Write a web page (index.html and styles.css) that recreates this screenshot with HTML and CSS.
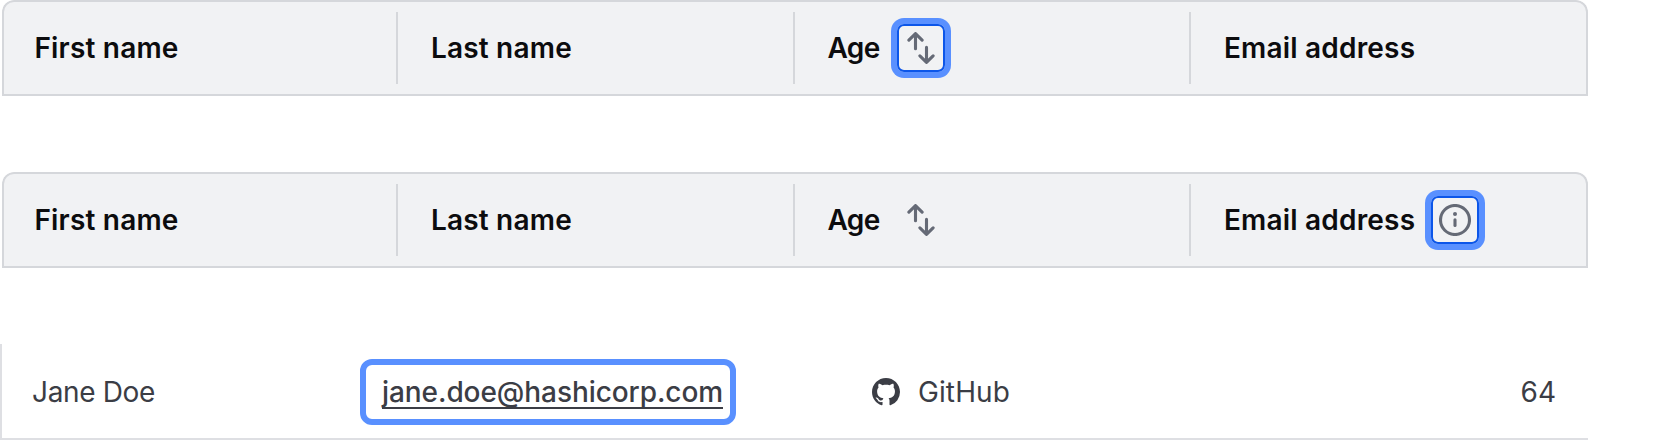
FILE: index.html
```
<!DOCTYPE html>
<html lang="en">
<head>
<meta charset="utf-8">
<title>Table focus states</title>
<link rel="stylesheet" href="styles.css">
</head>
<body>
<main class="page">
  <div class="table-head">
    <div class="th"><span>First name</span></div>
    <div class="th"><span>Last name</span></div>
    <div class="th"><span class="age">Age</span>
      <button class="icon-button focused" aria-label="Sort"><svg class="icon arrows" viewBox="0 0 32 32"><path d="M3.9 8.2 10.5 1.6 17.1 8.2M10.5 2V16.8M21.5 15.4V30M14.9 23.8 21.5 30.4 28.1 23.8"/></svg></button>
    </div>
    <div class="th"><span class="email">Email address</span></div>
  </div>

  <div class="table-head">
    <div class="th"><span>First name</span></div>
    <div class="th"><span>Last name</span></div>
    <div class="th"><span class="age">Age</span>
      <button class="icon-button" aria-label="Sort"><svg class="icon arrows" viewBox="0 0 32 32"><path d="M3.9 8.2 10.5 1.6 17.1 8.2M10.5 2V16.8M21.5 15.4V30M14.9 23.8 21.5 30.4 28.1 23.8"/></svg></button>
    </div>
    <div class="th"><span class="email">Email address</span>
      <button class="icon-button focused" aria-label="More information"><svg class="icon" viewBox="0 0 32 32"><circle cx="16" cy="16" r="14.5"/><path d="M16 15.8V21.5"/><circle class="dot" cx="16" cy="10" r="2"/></svg></button>
    </div>
  </div>

  <div class="table-row">
    <div class="td name">Jane Doe</div>
    <div class="td link-cell"><a class="link" href="#"><span class="link-text">jane.doe@hashicorp.com</span></a></div>
    <div class="td provider">
      <svg class="github" viewBox="0 0 16 16"><path d="M8 0C3.58 0 0 3.58 0 8c0 3.54 2.29 6.53 5.47 7.59.4.07.55-.17.55-.38 0-.19-.01-.82-.01-1.49-2.01.37-2.53-.49-2.69-.94-.09-.23-.48-.94-.82-1.13-.28-.15-.68-.52-.01-.53.63-.01 1.08.58 1.23.82.72 1.21 1.87.87 2.33.66.07-.52.28-.87.51-1.07-1.78-.2-3.64-.89-3.64-3.95 0-.87.31-1.59.82-2.15-.08-.2-.36-1.02.08-2.12 0 0 .67-.21 2.2.82.64-.18 1.32-.27 2-.27s1.36.09 2 .27c1.53-1.04 2.2-.82 2.2-.82.44 1.1.16 1.92.08 2.12.51.56.82 1.27.82 2.15 0 3.07-1.87 3.75-3.65 3.95.29.25.54.73.54 1.48 0 1.07-.01 1.93-.01 2.2 0 .21.15.46.55.38A8.01 8.01 0 0 0 16 8c0-4.42-3.58-8-8-8z"/></svg>
      <span>GitHub</span>
    </div>
    <div class="td count">64</div>
  </div>
</main>
</body>
</html>
```
FILE: styles.css
```
* {
  box-sizing: border-box;
}

body {
  margin: 0;
  background: #fff;
  font-family: Inter, sans-serif;
  font-size: 28px;
  line-height: 40px;
}

.page {
  width: 1588px;
  height: 440px;
  display: flex;
  flex-direction: column;
}

.table-head {
  display: grid;
  grid-template-columns: repeat(4, 1fr);
  height: 96px;
  margin: 0 0 76px 2px;
  flex: none;
  background:
    linear-gradient(#d5d7db, #d5d7db) 394px 12px / 2px 72px no-repeat,
    linear-gradient(#d5d7db, #d5d7db) 791px 12px / 2px 72px no-repeat,
    linear-gradient(#d5d7db, #d5d7db) 1187px 12px / 2px 72px no-repeat,
    #f1f2f4;
  box-shadow: inset 0 0 0 2px #d5d7db;
  border-radius: 12px 12px 0 0;
  color: #0c0c0e;
  font-weight: 600;
  letter-spacing: 0.2px;
}

.th {
  display: flex;
  align-items: center;
  padding-left: 32.4px;
}

.age {
  width: 53.6px;
  letter-spacing: -0.5px;
}

.email {
  width: 191.6px;
  white-space: nowrap;
}

.icon-button {
  width: 48px;
  height: 48px;
  margin-left: 16px;
  padding: 0;
  display: flex;
  align-items: center;
  justify-content: center;
  border: 2px solid transparent;
  border-radius: 7px;
  background: transparent;
}

.focused {
  border-color: #0c56e9;
  box-shadow: 0 0 0 6px #5990ff;
}

.icon {
  width: 32px;
  height: 32px;
  fill: none;
  stroke: #656a76;
  stroke-width: 3.1;
  stroke-linecap: round;
  stroke-linejoin: round;
}

.dot {
  fill: #656a76;
  stroke: none;
}

.table-row {
  display: grid;
  grid-template-columns: 358px 500px 400px 1fr;
  height: 96px;
  border-left: 2px solid #dedfe3;
  border-bottom: 2px solid #dedfe3;
  color: #3b3d45;
}

.td {
  display: flex;
  align-items: center;
  padding-top: 2px;
}

.name {
  padding-left: 30px;
  letter-spacing: -0.35px;
}

.link {
  width: 376px;
  height: 66px;
  padding-left: 16px;
  display: flex;
  align-items: center;
  border: 6px solid #5990ff;
  border-radius: 12px;
  color: inherit;
  font-weight: 500;
  letter-spacing: -0.07px;
  text-decoration: none;
}

.link-text {
  height: 34px;
  line-height: 34px;
  border-bottom: 2px solid #3b3d45;
}

.provider {
  padding-left: 12px;
  gap: 18px;
  letter-spacing: 0.1px;
}

.github {
  width: 28px;
  height: 28px;
  fill: #3b3d45;
}

.count {
  justify-content: flex-end;
  padding-right: 32px;
}
```
